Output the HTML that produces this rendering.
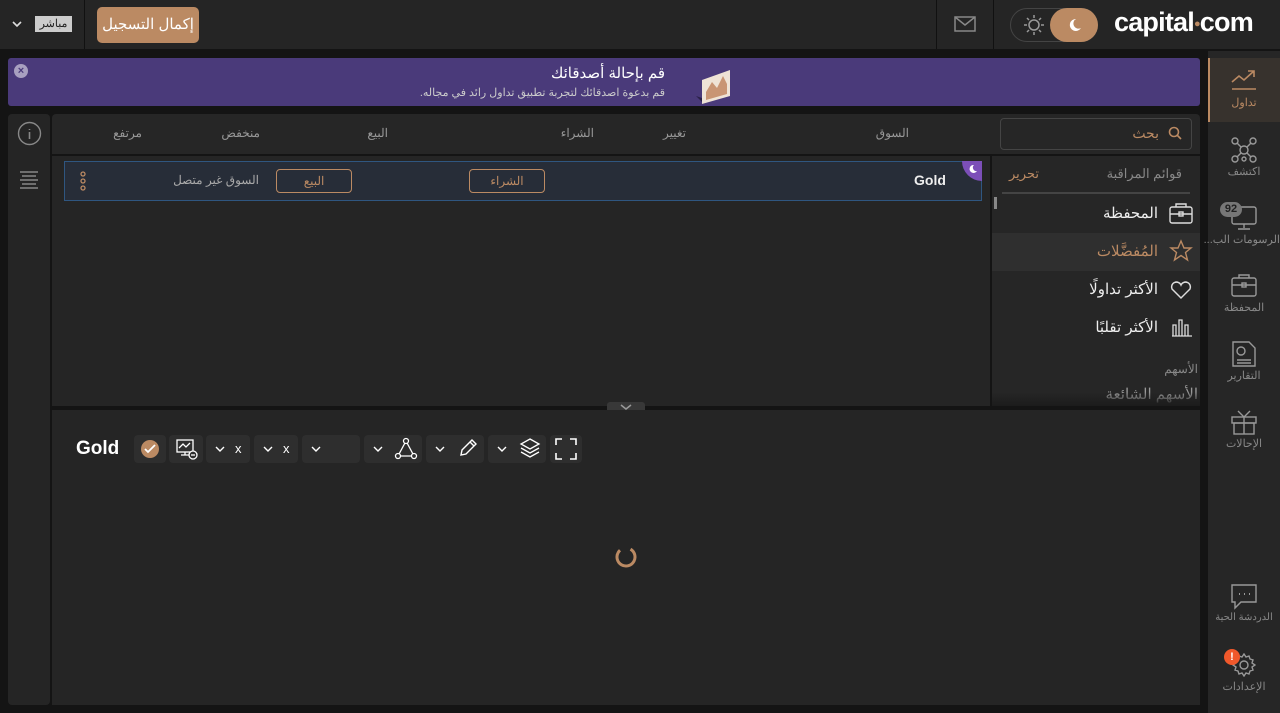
<!DOCTYPE html>
<html><head><meta charset="utf-8"><style>
*{box-sizing:border-box;margin:0;padding:0}
body{width:1280px;height:713px;background:#141414;font-family:"Liberation Sans","Noto Sans CJK SC",sans-serif;color:#ddd;position:relative;overflow:hidden}
.a{position:absolute}
.t{white-space:nowrap}
svg{position:absolute}
.btn{position:absolute;height:28px;background:#2e2e2e;border-radius:4px;top:435px}
</style></head><body>
<!-- top bar -->
<div class="a" style="left:0;top:0;width:1280px;height:49px;background:#252525"></div>
<div class="a" style="left:84px;top:0;width:1px;height:49px;background:#111"></div>
<div class="a" style="left:936px;top:0;width:1px;height:49px;background:#111"></div>
<div class="a" style="left:993px;top:0;width:1px;height:49px;background:#111"></div>
<svg style="left:11px;top:19px" width="12" height="10"><path d="M2 3l4 4 4-4" stroke="#ddd" stroke-width="1.6" fill="none"/></svg>
<div class="a t" style="left:35px;top:16px;width:37px;height:16px;background:#ccc;color:#222;font-size:11px;text-align:center;line-height:16px">مباشر</div>
<div class="a t" style="left:97px;top:7px;width:102px;height:36px;background:#bb8a63;border-radius:5px;color:#fff;font-size:15px;text-align:center;line-height:36px">إكمال التسجيل</div>
<svg style="left:954px;top:15px" width="22" height="18"><rect x="1" y="2" width="20" height="14" fill="none" stroke="#888" stroke-width="1.5"/><path d="M1 2l10 8 10-8" fill="none" stroke="#888" stroke-width="1.5"/></svg>
<div class="a" style="left:1010px;top:8px;width:88px;height:34px;border:1px solid #444;border-radius:17px"></div>
<svg style="left:1023px;top:14px" width="22" height="22"><circle cx="11" cy="11" r="5" fill="none" stroke="#999" stroke-width="1.5"/><g stroke="#999" stroke-width="1.5"><path d="M11 1v3M11 18v3M1 11h3M18 11h3M4 4l2 2M16 16l2 2M4 18l2-2M16 6l2-2"/></g></svg>
<div class="a" style="left:1050px;top:8px;width:48px;height:34px;background:#bb8a63;border-radius:17px"></div>
<svg style="left:1065px;top:16px" width="18" height="18"><path d="M11 3a6 6 0 1 0 5 9a5 5 0 0 1-5-9z" fill="#fff"/></svg>
<div class="a t" style="left:1114px;top:7px;font-size:27px;font-weight:bold;color:#fff;letter-spacing:-0.8px">capital<span style="font-size:11px;vertical-align:4px;color:#bb8a63">●</span>com</div>
<!-- right sidebar -->
<div class="a" style="left:1208px;top:51px;width:72px;height:662px;background:#262626"></div>
<div class="a" style="left:1208px;top:58px;width:72px;height:64px;background:#37322d;border-left:2px solid #bb8a63"></div>
<svg style="left:1230px;top:68px" width="28" height="24"><path d="M2 14l7-6 5 4 10-9M18 3h6v6" fill="none" stroke="#bb8a63" stroke-width="1.6"/><path d="M2 21h24" stroke="#bb8a63" stroke-width="1.6"/></svg>
<div class="a t" style="left:1208px;top:96px;width:72px;text-align:center;font-size:11px;color:#bb8a63">تداول</div>
<svg style="left:1231px;top:137px" width="26" height="26" fill="none" stroke="#999" stroke-width="1.4"><circle cx="13" cy="13" r="4"/><circle cx="4" cy="4" r="3"/><circle cx="22" cy="4" r="3"/><circle cx="4" cy="22" r="3"/><circle cx="22" cy="22" r="3"/><circle cx="13" cy="22" r="2"/><path d="M6 6l4 4M20 6l-4 4M6 20l4-4M20 20l-4-4"/></svg>
<div class="a t" style="left:1208px;top:165px;width:72px;text-align:center;font-size:11px;color:#888">اكتشف</div>
<svg style="left:1230px;top:205px" width="28" height="26" fill="none" stroke="#999" stroke-width="1.4"><rect x="2" y="2" width="24" height="17" rx="2"/><path d="M14 19v4M8 24h12"/></svg>
<div class="a t" style="left:1220px;top:202px;width:22px;height:15px;background:#777;border-radius:8px;color:#222;font-size:11px;font-weight:bold;text-align:center;line-height:15px">92</div>
<div class="a t" dir="rtl" style="left:1208px;top:233px;width:72px;text-align:center;font-size:11px;color:#888">الرسومات الب...</div>
<svg style="left:1231px;top:273px" width="26" height="24" fill="none" stroke="#999" stroke-width="1.4"><rect x="1" y="5" width="24" height="18" rx="2"/><path d="M8 5V2h10v3M1 12h24"/><rect x="11" y="10" width="4" height="4"/></svg>
<div class="a t" style="left:1208px;top:301px;width:72px;text-align:center;font-size:11px;color:#888">المحفظة</div>
<svg style="left:1232px;top:341px" width="24" height="26" fill="none" stroke="#999" stroke-width="1.4"><path d="M1 1h16l6 6v18H1z"/><circle cx="9" cy="10" r="4"/><path d="M5 19h14M5 22h14"/></svg>
<div class="a t" style="left:1208px;top:369px;width:72px;text-align:center;font-size:11px;color:#888">التقارير</div>
<svg style="left:1231px;top:409px" width="26" height="26" fill="none" stroke="#999" stroke-width="1.4"><rect x="1" y="8" width="24" height="6"/><rect x="3" y="14" width="20" height="11"/><path d="M13 8v17M13 8l-6-6M13 8l6-6"/></svg>
<div class="a t" style="left:1208px;top:437px;width:72px;text-align:center;font-size:11px;color:#888">الإحالات</div>
<svg style="left:1231px;top:584px" width="26" height="26" fill="none" stroke="#999" stroke-width="1.4"><path d="M1 1h24v17H10l-6 6v-6H1z"/><path d="M8 10h1M13 10h1M18 10h1" stroke-width="2"/></svg>
<div class="a t" style="left:1208px;top:612px;width:72px;text-align:center;font-size:10px;color:#888">الدردشة الحية</div>
<svg style="left:1232px;top:653px" width="24" height="24" fill="none" stroke="#999" stroke-width="1.4"><circle cx="12" cy="12" r="4"/><path d="M12 1l2 3 3-1 1 3 3 1-1 3 3 2-3 2 1 3-3 1-1 3-3-1-2 3-2-3-3 1-1-3-3-1 1-3-3-2 3-2-1-3 3-1 1-3 3 1z"/></svg>
<div class="a t" style="left:1224px;top:649px;width:16px;height:16px;background:#f0582b;border-radius:8px;color:#fff;font-size:11px;font-weight:bold;text-align:center;line-height:16px">!</div>
<div class="a t" style="left:1208px;top:680px;width:72px;text-align:center;font-size:11px;color:#888">الإعدادات</div>
<!-- banner -->
<div class="a" style="left:8px;top:58px;width:1192px;height:48px;background:#4a3a7a;border-radius:3px"></div>
<div class="a" style="left:14px;top:64px;width:14px;height:14px;border-radius:7px;background:#a8a0c0;color:#4a3a7a;font-size:11px;font-weight:bold;text-align:center;line-height:14px">×</div>
<div class="a t" dir="rtl" style="right:615px;top:64px;font-size:15px;color:#fff">قم بإحالة أصدقائك</div>
<div class="a t" dir="rtl" style="right:615px;top:86px;font-size:11px;color:#ccc">قم بدعوة اصدقائك لتجربة تطبيق تداول رائد في مجاله.</div>
<svg style="left:694px;top:60px" width="50" height="44"><path d="M8 20l28-10v26l-28 8z" fill="#efe3d6"/><path d="M12 32l6-10 5 6 6-12 4 8v10l-21 6z" fill="#c99574"/><path d="M2 36l6 6v-4z" fill="#2a2048"/></svg>
<!-- left sidebar -->
<div class="a" style="left:8px;top:114px;width:42px;height:591px;background:#252525;border-radius:4px"></div>
<svg style="left:17px;top:121px" width="25" height="25"><circle cx="12.5" cy="12.5" r="11" fill="none" stroke="#888" stroke-width="1.4"/><path d="M12.5 8v1M12.5 11v7" stroke="#888" stroke-width="1.6"/></svg>
<svg style="left:18px;top:170px" width="22" height="22" stroke="#888" stroke-width="1.4"><path d="M2 2h18M4 6h14M2 10h18M4 14h14M2 18h18"/></svg>
<!-- table header -->
<div class="a" style="left:52px;top:114px;width:1148px;height:40px;background:#262626;border-radius:4px 4px 0 0"></div>
<div class="a" style="left:1000px;top:118px;width:192px;height:32px;border:1px solid #444;border-radius:4px"></div>
<svg style="left:1168px;top:126px" width="14" height="14" fill="none" stroke="#bb8a63" stroke-width="1.6"><circle cx="6" cy="6" r="4.5"/><path d="M9.5 9.5l3.5 3.5"/></svg>
<div class="a t" style="right:121px;top:125px;font-size:14px;color:#bb8a63">بحث</div>
<div class="a t" style="right:371px;top:126px;font-size:12px;color:#999">السوق</div>
<div class="a t" style="right:594px;top:126px;font-size:12px;color:#999">تغيير</div>
<div class="a t" style="right:686px;top:126px;font-size:12px;color:#999">الشراء</div>
<div class="a t" style="right:892px;top:126px;font-size:12px;color:#999">البيع</div>
<div class="a t" style="right:1020px;top:126px;font-size:12px;color:#999">منخفض</div>
<div class="a t" style="right:1138px;top:126px;font-size:12px;color:#999">مرتفع</div>
<!-- list area -->
<div class="a" style="left:52px;top:156px;width:938px;height:250px;background:#252525"></div>
<div class="a" style="left:64px;top:161px;width:918px;height:40px;background:#272d38;border:1px solid #2f5680"></div>
<div class="a" style="left:962px;top:161px;width:20px;height:20px;background:#7c4fb8;border-radius:0 0 0 20px"></div>
<svg style="left:967px;top:163px" width="12" height="12"><path d="M7 2a4 4 0 1 0 3 6a3.5 3.5 0 0 1-3-6z" fill="#fff"/></svg>
<div class="a t" style="left:914px;top:172px;font-size:14px;font-weight:bold;color:#eee">Gold</div>
<div class="a t" style="left:469px;top:169px;width:76px;height:24px;border:1px solid #bb8a63;border-radius:4px;color:#bb8a63;font-size:12px;text-align:center;line-height:22px">الشراء</div>
<div class="a t" style="left:276px;top:169px;width:76px;height:24px;border:1px solid #bb8a63;border-radius:4px;color:#bb8a63;font-size:12px;text-align:center;line-height:22px">البيع</div>
<div class="a t" style="right:1021px;top:173px;font-size:12px;color:#aaa">السوق غير متصل</div>
<svg style="left:79px;top:171px" width="8" height="20" fill="none" stroke="#bb8a63" stroke-width="1.3"><circle cx="4" cy="3" r="2"/><circle cx="4" cy="10" r="2"/><circle cx="4" cy="17" r="2"/></svg>
<!-- watchlist panel -->
<div class="a" style="left:992px;top:156px;width:208px;height:250px;background:#262626"></div>
<div class="a t" style="right:98px;top:166px;font-size:13px;color:#888">قوائم المراقبة</div>
<div class="a t" style="left:1009px;top:166px;font-size:13px;color:#bb8a63">تحرير</div>
<div class="a" style="left:1002px;top:192px;width:188px;height:2px;background:#444"></div>
<div class="a" style="left:994px;top:197px;width:3px;height:12px;background:#888"></div>
<svg style="left:1169px;top:202px" width="24" height="22" fill="none" stroke="#ddd" stroke-width="1.4"><rect x="1" y="5" width="22" height="16" rx="2"/><path d="M7 5V2h10v3M1 12h22"/><rect x="10" y="10" width="4" height="4"/></svg>
<div class="a t" style="right:122px;top:204px;font-size:15px;color:#eee">المحفظة</div>
<div class="a" style="left:992px;top:233px;width:208px;height:38px;background:#2f2f2f"></div>
<svg style="left:1169px;top:239px" width="24" height="24"><path d="M12 2l3 7h7l-5.5 4.5 2 7.5-6.5-4.5-6.5 4.5 2-7.5L2 9h7z" fill="none" stroke="#bb8a63" stroke-width="1.4"/></svg>
<div class="a t" style="right:122px;top:242px;font-size:15px;color:#bb8a63">المُفضَّلات</div>
<svg style="left:1170px;top:280px" width="22" height="20"><path d="M11 18L2 9a4.5 4.5 0 0 1 9-4a4.5 4.5 0 0 1 9 4z" fill="none" stroke="#ddd" stroke-width="1.5"/></svg>
<div class="a t" style="right:122px;top:280px;font-size:15px;color:#eee">الأكثر تداولًا</div>
<svg style="left:1171px;top:317px" width="22" height="20" fill="none" stroke="#ddd" stroke-width="1.3"><path d="M2 8h3v11H2zM8 3h3v16H8zM14 8h3v11h-3zM1 19h20"/></svg>
<div class="a t" style="right:122px;top:318px;font-size:15px;color:#eee">الأكثر تقلبًا</div>
<div class="a t" style="right:82px;top:362px;font-size:12px;color:#888">الأسهم</div>
<div class="a t" style="right:82px;top:385px;font-size:15px;color:#999">الأسهم الشائعة</div>
<div class="a" style="left:992px;top:392px;width:208px;height:14px;background:linear-gradient(#26262600,#1c1c1c)"></div>
<!-- divider -->
<div class="a" style="left:607px;top:402px;width:38px;height:12px;background:#383838;border-radius:3px"></div>
<svg style="left:620px;top:404px" width="12" height="8"><path d="M1 1l5 4 5-4" stroke="#999" stroke-width="1.5" fill="none"/></svg>
<!-- chart area -->
<div class="a" style="left:52px;top:410px;width:1148px;height:295px;background:#252525"></div>
<div class="a t" style="left:76px;top:438px;font-size:19px;font-weight:bold;color:#fff">Gold</div>
<div class="btn" style="left:134px;width:32px"></div>
<div class="a" style="left:141px;top:440px;width:18px;height:18px;border-radius:9px;background:#bb8a63"></div>
<svg style="left:144px;top:444px" width="12" height="10"><path d="M1 5l3 3 7-7" stroke="#fff" stroke-width="1.8" fill="none"/></svg>
<div class="btn" style="left:169px;width:34px"></div>
<svg style="left:175px;top:438px" width="24" height="22" fill="none" stroke="#fff" stroke-width="1.3"><rect x="2" y="2" width="16" height="12"/><path d="M10 14v3M6 17h8M4 10l4-4 3 3 4-4"/><circle cx="18" cy="17" r="4" fill="#2e2e2e"/><path d="M16 17h4"/></svg>
<div class="btn" style="left:206px;width:44px"></div>
<svg style="left:214px;top:445px" width="12" height="8"><path d="M2 2l4 4 4-4" stroke="#fff" stroke-width="1.4" fill="none"/></svg>
<div class="a t" style="left:235px;top:441px;font-size:13px;color:#fff">x</div>
<div class="btn" style="left:254px;width:44px"></div>
<svg style="left:262px;top:445px" width="12" height="8"><path d="M2 2l4 4 4-4" stroke="#fff" stroke-width="1.4" fill="none"/></svg>
<div class="a t" style="left:283px;top:441px;font-size:13px;color:#fff">x</div>
<div class="btn" style="left:302px;width:58px"></div>
<svg style="left:310px;top:445px" width="12" height="8"><path d="M2 2l4 4 4-4" stroke="#fff" stroke-width="1.4" fill="none"/></svg>
<div class="btn" style="left:364px;width:58px"></div>
<svg style="left:372px;top:445px" width="12" height="8"><path d="M2 2l4 4 4-4" stroke="#fff" stroke-width="1.4" fill="none"/></svg>
<svg style="left:394px;top:437px" width="24" height="24" fill="none" stroke="#fff" stroke-width="1.3"><path d="M12 4L4 19h16z"/><circle cx="12" cy="4" r="2.5" fill="#2e2e2e"/><circle cx="4" cy="19" r="2.5" fill="#2e2e2e"/><circle cx="20" cy="19" r="2.5" fill="#2e2e2e"/></svg>
<div class="btn" style="left:426px;width:58px"></div>
<svg style="left:434px;top:445px" width="12" height="8"><path d="M2 2l4 4 4-4" stroke="#fff" stroke-width="1.4" fill="none"/></svg>
<svg style="left:458px;top:438px" width="20" height="20" fill="none" stroke="#fff" stroke-width="1.4"><path d="M3 17l1-5L14 2l4 4L8 16zM12 4l4 4"/></svg>
<div class="btn" style="left:488px;width:58px"></div>
<svg style="left:496px;top:445px" width="12" height="8"><path d="M2 2l4 4 4-4" stroke="#fff" stroke-width="1.4" fill="none"/></svg>
<svg style="left:519px;top:437px" width="22" height="22" fill="none" stroke="#fff" stroke-width="1.3"><path d="M11 2l9 5-9 5-9-5zM2 11l9 5 9-5M2 15l9 5 9-5"/></svg>
<div class="btn" style="left:550px;width:32px"></div>
<svg style="left:554px;top:437px" width="24" height="24" fill="none" stroke="#fff" stroke-width="1.6"><path d="M2 8V2h6M16 2h6v6M22 16v6h-6M8 22H2v-6"/></svg>
<svg style="left:614px;top:545px" width="24" height="24"><circle cx="12" cy="12" r="9" fill="none" stroke="#bb8a63" stroke-width="3" stroke-dasharray="45 12" transform="rotate(-60 12 12)"/></svg>
</body></html>
